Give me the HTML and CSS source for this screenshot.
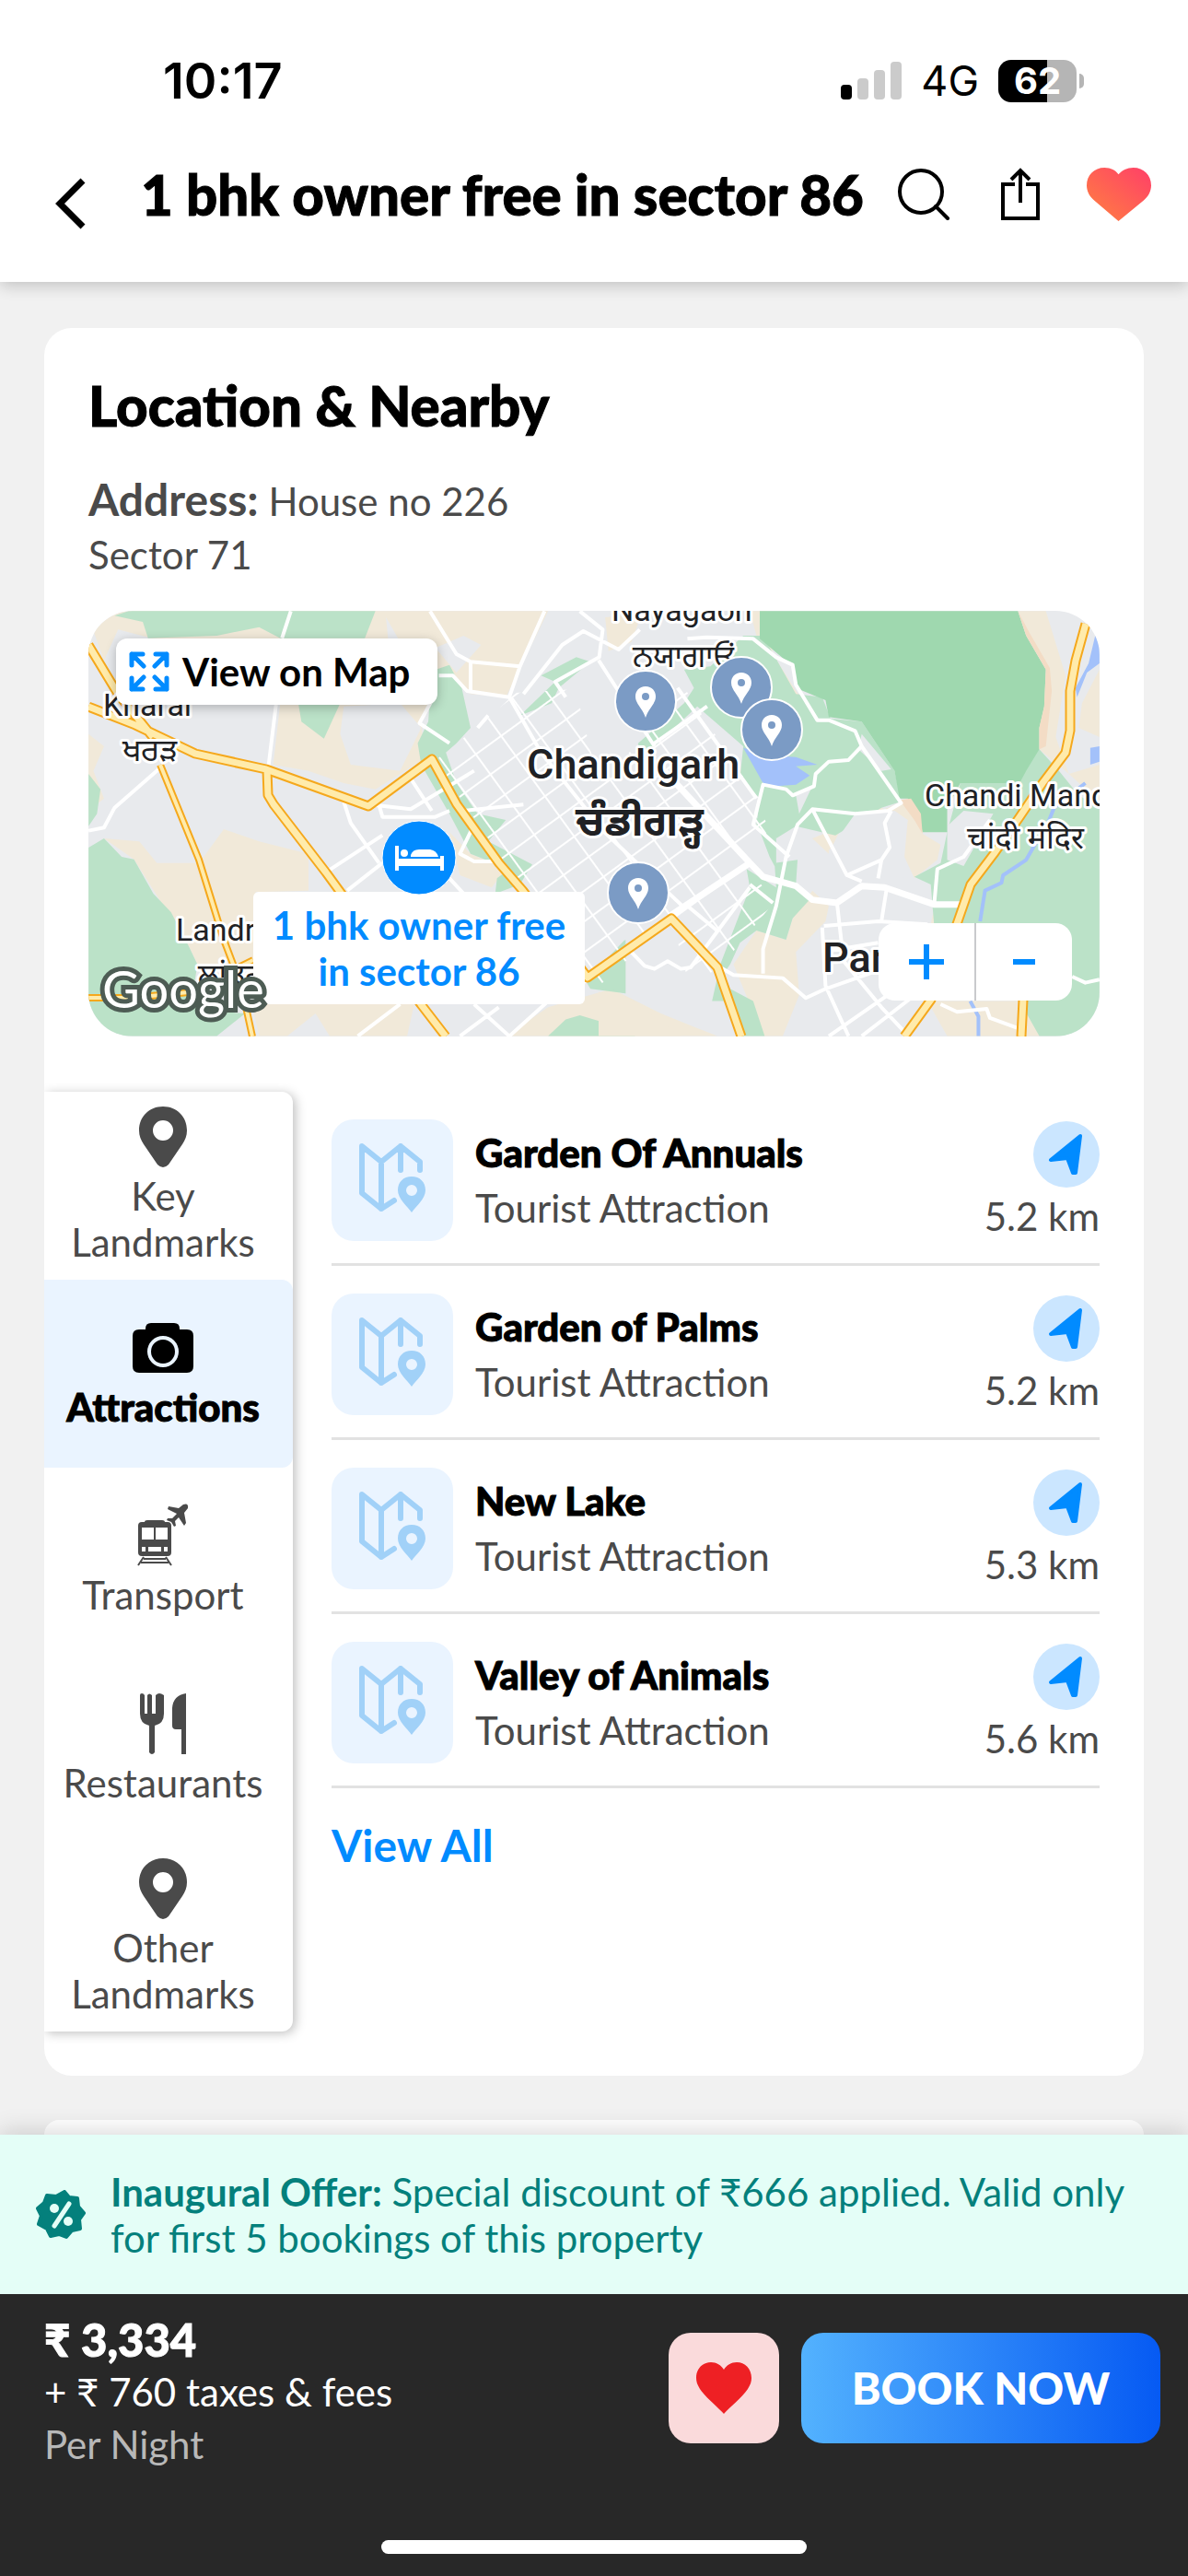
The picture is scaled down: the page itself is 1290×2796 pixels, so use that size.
FILE: index.html
```html
<!DOCTYPE html>
<html lang="en">
<head>
<meta charset="utf-8">
<meta name="viewport" content="width=device-width, initial-scale=1">
<title>1 bhk owner free in sector 86</title>
<link rel="stylesheet" href="styles.css">
</head>
<body>
<svg class="defs" width="0" height="0" aria-hidden="true">
  <defs>
    <linearGradient id="heart-fill" x1="0" y1="1" x2="1" y2="0"><stop offset="0.2" stop-color="#ff7448"/><stop offset="1" stop-color="#ff3f68"/></linearGradient>
    <symbol id="pin" viewBox="0 0 52 66"><path fill-rule="evenodd" d="M26 0C11 0 0 11 0 26C0 32 2 36 5 41L20 63Q26 69 32 63L47 41C50 36 52 32 52 26C52 11 41 0 26 0ZM26 15A11 11 0 1 1 26 37A11 11 0 1 1 26 15Z"/></symbol>
    <symbol id="place" viewBox="0 0 72 80"><g fill="none" stroke="#a1d1f8" stroke-width="6" stroke-linecap="round" stroke-linejoin="round"><path d="M38 62L24 71L3 54V3L24 20L45 3L66 20V29M24 20V71M45 3V29"/></g><path fill="#a1d1f8" fill-rule="evenodd" d="M57 36C48 36 42 42 42 51C42 60 52 68 57 75C62 68 72 60 72 51C72 42 66 36 57 36ZM57 45A6 6 0 1 1 57 57A6 6 0 1 1 57 45Z"/></symbol>
    <symbol id="navigate" viewBox="0 0 72 72"><circle cx="36" cy="36" r="36" fill="#cbe6ff"/><path fill="#018bff" stroke="#018bff" stroke-width="4" stroke-linejoin="round" d="M51 16L19 42L37 40L43 56H46Z"/></symbol>
    <symbol id="map-pin" viewBox="0 0 68 68"><circle cx="34" cy="34" r="33" fill="#7b9bc5" stroke="#fff" stroke-width="2"/><path fill="#fff" fill-rule="evenodd" d="M34 18C27 18 23 23 23 29C23 37 31 42 34 52C37 42 45 37 45 29C45 23 41 18 34 18ZM34 25A4 4 0 1 1 34 33A4 4 0 1 1 34 25Z"/></symbol>
    <pattern id="sectors" width="34" height="27" patternUnits="userSpaceOnUse" patternTransform="translate(729 997) rotate(-36)"><path d="M0 0H34M0 0V27" fill="none" stroke="#fff" stroke-width="4"/></pattern>
  </defs>
</svg>

<header class="top">
  <div class="status">
    <span class="clock">10:17</span>
    <span class="status-right">
      <svg class="signal" viewBox="0 0 66 42" aria-hidden="true"><rect y="25" width="12" height="16" rx="4"/><g fill="#cbcbcb"><rect x="18" y="18" width="12" height="23" rx="4"/><rect x="36" y="9" width="12" height="32" rx="4"/><rect x="54" width="12" height="41" rx="4"/></g></svg>
      <span class="network">4G</span>
      <span class="battery"><span class="charge">62</span></span>
    </span>
  </div>
  <div class="titlebar">
    <button class="icon-btn back" type="button" aria-label="Back"><svg viewBox="0 0 36 56"><path d="M31 3L6 28L31 53" fill="none" stroke="#000" stroke-width="7"/></svg></button>
    <h1 class="title">1 bhk owner free in sector 86</h1>
    <div class="actions">
      <button class="icon-btn search" type="button" aria-label="Search"><svg viewBox="0 0 58 58"><g fill="none" stroke="#000" stroke-width="4"><circle cx="26" cy="26" r="23"/><path d="M42 42L55 55" stroke-linecap="round"/></g></svg></button>
      <button class="icon-btn share" type="button" aria-label="Share"><svg viewBox="0 0 42 58"><path d="M15 18H2V55H40V18H27M21 38V4M11 13L21 3L31 13" fill="none" stroke="#000" stroke-width="4"/></svg></button>
      <button class="icon-btn saved" type="button" aria-label="Saved"><svg viewBox="0 0 69 57"><path fill="url(#heart-fill)" d="M34 57L8 35C3 31 0 25 0 19C0 8 8 0 19 0C26 0 31 3 34 7C38 3 43 0 50 0C61 0 69 8 69 19C69 25 66 31 61 35Z"/></svg></button>
    </div>
  </div>
</header>

<main class="content">
  <section class="card">
    <h2 class="heading">Location &amp; Nearby</h2>
    <p class="address"><strong>Address:</strong> House no 226<br>Sector 71</p>

    <div class="map">
      <svg class="map-canvas" viewBox="96 663 1098 462" preserveAspectRatio="xMidYMid slice" role="img" aria-label="Map of Chandigarh">
        <rect x="96" y="663" width="1098" height="462" fill="#e8eaed"/>
        <g transform="translate(90 650) scale(.3827 .3333)">
          <g fill="#f1e9d9">
            <path d="M16 60L100 40H1320L1260 180L1200 320L1100 310L1010 240L960 400L970 520L830 620L740 600L640 560L540 540L560 340L540 130L300 140L230 200L200 130L100 100L60 200Z"/>
            <path d="M60 780L160 790L210 860L330 860L400 750L500 790L640 830L640 950L490 955V1160L430 1230L325 1190L300 1130L145 848ZM480 1320H940L920 1424H700L660 1350L580 1424H500ZM1040 760L1100 830L1200 880L1160 940L1070 900ZM1200 1424L1320 1330L1500 1270L1640 1350L1800 1424ZM16 440L60 480L30 560L60 650L16 690Z"/>
          </g>
          <g fill="#e8eaed"><path d="M740 350L900 340L960 420L900 560L760 540L730 440ZM860 60L910 160L870 180ZM1000 160L1080 120L1130 150L1060 240Z"/></g>
          <g fill="#bbe2c8">
            <path d="M90 55L170 75L185 128L380 120L500 92L560 128H800L830 40H130Z"/>
            <path d="M612 345H728L684 455L620 400Z"/>
            <path d="M990 235L1040 215L1075 290L1100 420L1060 470L1030 500L1060 600L1120 700L1200 720L1150 790L1275 865L1240 930L1170 960L1175 910L1210 880L1100 830L1040 700L960 540L950 470L980 400Z"/>
            <path d="M1240 380L1340 270L1300 250L1400 190L1440 205L1350 290L1330 340Z"/>
            <path d="M16 570L50 620L40 700L16 740ZM16 810L60 780L110 840L145 848L200 960L250 1020L300 1130L325 1190L310 1300L395 1345L460 1350L380 1424H16Z"/>
            <path d="M1320 1424L1370 1370L1410 1356L1480 1380L1568 1424ZM1430 1250L1540 1110V1285L1440 1270Z"/>
          </g>
        </g>
        <g transform="translate(650 650) scale(.3571 .3333)">
          <g fill="#f1e9d9">
            <path d="M20 60L130 50L100 140L30 170ZM460 40H510L530 180L600 300L640 350L560 350L500 200ZM1275 40H1360L1420 250L1390 450L1430 570L1340 490V420L1360 230ZM1523 230L1470 340L1460 420L1523 450ZM1430 570L1523 540V660Z"/>
            <path d="M650 780L880 680L920 660L980 700L985 765L1040 800L1030 850L960 910L930 840L940 720L860 680L740 740L700 830ZM650 950L700 1000L690 1050L600 1150L610 1290L560 1424H500L410 1190L480 1080L570 1110L590 1040ZM0 1280L90 1300L250 1424H0ZM1020 1010H1080V1060H1010ZM1000 1310H1300L1340 1424H1060Z"/>
          </g>
          <g fill="#bbe2c8">
            <path d="M1340 490L1400 560L1460 640L1523 680V1424H1340L1280 1310L1180 1060H1020L1010 930L960 905L1040 860L1060 760L1100 600Z"/>
            <path d="M260 230L340 220L440 120H500L600 310L680 320L705 390L800 400L900 560L920 660L860 680L720 770L600 740L600 740L540 780L480 740L490 650L430 580L440 480L300 350L180 470L130 520L120 470L260 340L290 290Z"/>
            <path d="M535 860L605 850L600 930L650 970L590 1040L570 1110L480 1080L430 1120L400 1190L380 1220L400 1270L470 1310L505 1424H440L380 1310H345L370 1190L460 940L450 880L540 940ZM470 700L540 780V880L520 840ZM0 1200L80 1110V1285L0 1260Z"/>
          </g>
          <path fill="#e8eaed" d="M600 640L650 610L610 700ZM800 440L890 555L860 560L790 490ZM1060 740L1110 690L1200 700L1110 870L1060 850ZM900 690L940 720L920 830L960 910L700 890L700 820L780 700Z"/>
          <path fill="#9fd8af" d="M490 40H1275L1300 120L1360 230L1355 350L1340 420V490L1300 560L1280 600H1100L1060 680V760H985L970 690L940 650L915 650L900 560L850 480L800 400L700 385L690 330L600 290L590 220L490 130Z"/>
          <path fill="#f3dcc5" d="M1275 40L1310 110L1372 225L1378 300L1360 480L1340 490V420L1355 350L1360 230L1300 120ZM915 655L950 650L980 700L985 765L960 720Z"/>
          <path fill="#a3c1fa" d="M440 485L520 510L600 515L665 540L600 545L642 575L600 605L540 610L500 600ZM1510 120H1523V210L1485 240L1455 320L1450 290L1490 210ZM1495 485L1523 480V530L1495 540Z"/>
          <path class="river" d="M1480 600L1385 680L1370 720L1300 850L1230 900L1225 925L1175 950L1160 1050M1130 1310L1155 1360V1424"/>
        </g>
        <path fill="url(#sectors)" d="M472 826L530 780L560 752L625 748L650 850L700 800L740 742L818 860L835 900L811 937L840 980L790 1040L750 1075L729 997L640 1080L575 975Z"/>
        <g class="streets" transform="translate(90 650) scale(.3827 .3333)">
          <path d="M590 40L565 128M548 345L525 560M985 40L1060 180L1100 205L1240 220M1310 40L1240 220L1210 320L1300 500L1480 760L1710 1010M1410 40L1475 100L1465 190L1340 270L1370 320M1010 250L1050 250L1090 300L1210 320M1250 310L1360 150L1420 105L1520 165L1580 100M1100 205V305M1000 310L955 405L1040 470M16 755L60 745L90 680L220 550M740 660L760 730L840 860M840 670L850 710H1000L1040 690M815 670L930 685L1110 560M690 890L850 770M930 585L990 690M1080 690L1250 670M1110 735L1070 830L1110 855H1180M780 1424L900 1320M1070 1424L1180 1330M1110 1320L1210 1424L1330 1300M750 950L850 860M1000 860L1080 960M1150 380L1120 420"/>
        </g>
        <g class="streets" transform="translate(650 650) scale(.3571 .3333)">
          <path d="M0 200L60 300L170 480M170 470L330 350M240 290L480 650M270 130L330 125L470 130L540 190L590 215L600 280L665 395H700L780 430L800 480L760 525L700 530L660 570L655 610L590 640L570 620L500 605L470 735L580 840M800 480L920 665L880 690L780 700L650 685L605 735L570 840L540 1000L500 1140V1220M650 685L755 900L800 920M755 900L860 850L885 810L870 730L890 690M860 850L850 910M725 990L745 1180L860 1330L930 1410M875 950L860 1050M1020 1000L1030 880L1110 840L1190 720M370 1200L410 1225L560 1235L630 1300L690 1270L850 1210M685 1065L850 1050L1000 1060M680 1070L690 1260L760 1424M680 1150L850 1120M700 1424L880 1290M800 1424L950 1300M1440 1230L1480 1250L1523 1240M1040 1320L1090 1345L1180 1335L1190 1365L1280 1400M90 1140L140 1195L170 1205L210 1180L250 1205L280 1200L460 940M530 990L460 930M270 1000L360 1080"/>
          <path class="avenue" d="M200 560L330 710L460 860M220 1030L460 860L500 905L600 935L650 980L725 990L800 935L870 940L1020 995L1105 995"/>
        </g>
        <g class="highway-edge">
          <path d="M96 700L128 753L166 800M96 767L147 787L212 818L289 835L400 875L469 824L496 873L542 937L568 967L638 1061L729 997L779 1050L805 1125M290 836L291 863L297 873L354 947L373 973L457 1090L484 1125M1179 677L1168 717L1162 750V793L1157 817L1132 850L1107 887L1079 927L1054 960L1039 1003L1011 1085L982 1125M1111 1085L1109 1125"/>
          <path class="thin" d="M174 830L216 933L243 1020L262 1070L274 1125M96 1083H143L205 1077L275 1042"/>
        </g>
        <g class="highway">
          <path d="M96 700L128 753L166 800M96 767L147 787L212 818L289 835L400 875L469 824L496 873L542 937L568 967L638 1061L729 997L779 1050L805 1125M290 836L291 863L297 873L354 947L373 973L457 1090L484 1125M1179 677L1168 717L1162 750V793L1157 817L1132 850L1107 887L1079 927L1054 960L1039 1003L1011 1085L982 1125M1111 1085L1109 1125"/>
          <path class="thin" d="M174 830L216 933L243 1020L262 1070L274 1125M96 1083H143L205 1077L275 1042"/>
        </g>
        <g class="town">
          <text x="664" y="674">Nayagaon</text>
          <text x="687" y="724">ਨਯਾਗਾਓਂ</text>
          <text x="112" y="777">Kharar</text>
          <text x="133" y="826">ਖਰੜ</text>
          <text x="1004" y="875">Chandi Mandir</text>
          <text x="1050" y="921">चांदी मंदिर</text>
          <text x="191" y="1021">Landran</text>
          <text x="215" y="1070">ਲਾਂਡਰਾਂ</text>
        </g>
        <g class="city">
          <text x="572" y="845">Chandigarh</text>
          <text class="heavy" x="625" y="907">ਚੰਡੀਗੜ੍ਹ</text>
          <text x="893" y="1055">Panchkula</text>
        </g>
        <use href="#map-pin" x="667" y="727" width="68" height="68"/>
        <use href="#map-pin" x="771" y="712" width="68" height="68"/>
        <use href="#map-pin" x="804" y="758" width="68" height="68"/>
        <use href="#map-pin" x="659" y="935" width="68" height="68"/>
      </svg>
      <button class="view-map" type="button"><svg viewBox="0 0 44 44" aria-hidden="true"><path d="M3 15V3H15M3 3L16 16M29 3H41V15M41 3L28 16M3 29V41H15M3 41L16 28M29 41H41V29M41 41L28 28" fill="none" stroke="#018bff" stroke-width="5" stroke-linecap="round" stroke-linejoin="round"/></svg>View on Map</button>
      <div class="stay">
        <svg class="stay-pin" viewBox="0 0 82 82" aria-hidden="true"><circle cx="41" cy="41" r="40" fill="#018bff" stroke="#fff" stroke-width="1"/><path fill="#fff" d="M15 28H19V42H64V39H68V55H64V50H19V55H15ZM21 36A4 4 0 1 1 29 36A4 4 0 1 1 21 36ZM32 40V38Q34 32 41 32H53Q60 33 62 40Z"/><path d="M19 41H64" stroke="#018bff" stroke-width="2"/></svg>
        <span class="stay-label">1 bhk owner free in sector 86</span>
      </div>
      <span class="google">Google</span>
      <div class="zoom">
        <button type="button" aria-label="Zoom in"><svg viewBox="0 0 40 40"><path d="M1 20H39M20 1V39" stroke="#018bff" stroke-width="6"/></svg></button>
        <button type="button" aria-label="Zoom out"><svg viewBox="0 0 40 40"><path d="M8 20H32" stroke="#018bff" stroke-width="6"/></svg></button>
      </div>
    </div>

    <div class="nearby">
      <nav class="tabs" aria-label="Nearby categories">
        <button class="tab" type="button"><svg viewBox="0 0 66 66" aria-hidden="true"><use href="#pin" x="7" width="52" height="66"/></svg>Key Landmarks</button>
        <button class="tab active" type="button" aria-current="true"><svg viewBox="0 0 66 66" aria-hidden="true"><path fill-rule="evenodd" d="M14 12Q14 6 20 6H45Q51 6 51 12V13H59Q66 13 66 20V53Q66 60 59 60H7Q0 60 0 53V20Q0 13 7 13H14ZM33 20A17 17 0 1 0 33 54A17 17 0 1 0 33 20ZM33 24A13 13 0 1 1 33 50A13 13 0 1 1 33 24Z"/></svg>Attractions</button>
        <button class="tab" type="button"><svg viewBox="0 0 66 66" aria-hidden="true"><path fill-rule="evenodd" d="M13 18Q13 16 16 16H32Q35 16 35 18H38Q42 18 42 22V51Q42 55 38 55H10Q6 55 6 51V22Q6 18 10 18H13ZM10 24V37H23V24ZM25 24V37H38V24ZM10 45V50H14V45ZM17 45V50H31V45ZM34 45V50H38V45Z"/><path d="M12 56L6 65M36 56L42 65M12 58H36M9 62H39" fill="none" stroke="#4a4a4a" stroke-width="2"/><path d="M39 1L50 3L55 -1Q61 -3 60 3L56 8L58 19L56 22L50 13L46 17L47 22L45 23L42 18L37 16L38 14L43 14L48 9L38 4Z"/></svg>Transport</button>
        <button class="tab" type="button"><svg viewBox="0 0 66 66" aria-hidden="true"><path d="M8 2Q8 0 10 0T13 2V22H16V2Q18 -1 21 2V22H25V2Q27 0 29 0T34 2V22Q34 33 24 35V64Q21 68 18 64V35Q8 33 8 22ZM58 0V66H53V39H47Q43 39 43 35V16Q44 2 58 0Z"/></svg>Restaurants</button>
        <button class="tab" type="button"><svg viewBox="0 0 66 66" aria-hidden="true"><use href="#pin" x="7" width="52" height="66"/></svg>Other Landmarks</button>
      </nav>
      <div class="places">
        <ul class="place-list">
          <li class="place"><span class="thumb"><svg aria-hidden="true"><use href="#place"/></svg></span><div class="info"><h3>Garden Of Annuals</h3><p>Tourist Attraction</p></div><div class="distance"><svg aria-hidden="true"><use href="#navigate"/></svg><span>5.2 km</span></div></li>
          <li class="place"><span class="thumb"><svg aria-hidden="true"><use href="#place"/></svg></span><div class="info"><h3>Garden of Palms</h3><p>Tourist Attraction</p></div><div class="distance"><svg aria-hidden="true"><use href="#navigate"/></svg><span>5.2 km</span></div></li>
          <li class="place"><span class="thumb"><svg aria-hidden="true"><use href="#place"/></svg></span><div class="info"><h3>New Lake</h3><p>Tourist Attraction</p></div><div class="distance"><svg aria-hidden="true"><use href="#navigate"/></svg><span>5.3 km</span></div></li>
          <li class="place"><span class="thumb"><svg aria-hidden="true"><use href="#place"/></svg></span><div class="info"><h3>Valley of Animals</h3><p>Tourist Attraction</p></div><div class="distance"><svg aria-hidden="true"><use href="#navigate"/></svg><span>5.6 km</span></div></li>
        </ul>
        <a class="view-all" href="#places">View All</a>
      </div>
    </div>
  </section>
  <section class="card next-card"></section>
</main>

<footer class="bottom">
  <div class="offer">
    <svg class="offer-icon" viewBox="0 0 54 54" aria-hidden="true"><path fill="#04807c" stroke="#04807c" stroke-width="4" stroke-linejoin="round" d="M31 2L36 8L45 9L46 18L52 25L47 32L48 42L39 44L33 51L25 48L16 50L12 42L3 37L6 28L2 20L9 14L12 6L22 7Z"/><path d="M36 15L20 39" stroke="#e4fef7" stroke-width="5" stroke-linecap="round"/><circle cx="20" cy="20" r="5" fill="#e4fef7"/><circle cx="35" cy="34" r="5" fill="#e4fef7"/></svg>
    <p><strong>Inaugural Offer:</strong> Special discount of ₹666 applied. Valid only for first 5 bookings of this property</p>
  </div>
  <div class="booking">
    <div class="price">
      <strong>₹ 3,334</strong>
      <span>+ ₹ 760 taxes &amp; fees</span>
      <span class="per">Per Night</span>
    </div>
    <button class="wish" type="button" aria-label="Remove from wishlist"><svg viewBox="0 0 60 56"><path fill="#ee2024" d="M30 56C25 50 10 38 4 29C1 24 0 21 0 17C0 7 7 0 16 0C22 0 27 3 30 8C33 3 38 0 44 0C53 0 60 7 60 17C60 21 59 24 56 29C50 38 35 50 30 56Z"/></svg></button>
    <button class="book" type="button">BOOK NOW</button>
  </div>
  <div class="home-indicator"></div>
</footer>
</body>
</html>
```
FILE: styles.css
```css
* { box-sizing: border-box; }
body, h1, h2, h3, p, ul { margin: 0; padding: 0; }
body {
  height: 100vh;
  display: flex;
  flex-direction: column;
  background: #f1f1f1;
  color: #000;
  font-family: Lato, "Noto Sans", sans-serif;
  font-size: 42px;
  line-height: 50px;
}
button { border: 0; padding: 0; margin: 0; background: none; color: inherit; font: inherit; cursor: pointer; }
svg { display: block; }
.defs { position: absolute; }
.title, .heading, .info h3, .tab.active, .price strong { font-weight: 900; -webkit-text-stroke: 1px currentColor; }

/* Header */
.top { position: relative; flex: none; padding: 56px 40px 50px 56px; background: #fff; box-shadow: 0 4px 16px rgba(0, 0, 0, .2); }
.status { display: flex; justify-content: space-between; align-items: center; height: 64px; padding: 0 81px 0 121px; font-family: Inter, sans-serif; }
.clock { font-size: 54px; font-weight: 600; }
.status-right { display: flex; align-items: center; gap: 21px; }
.signal { width: 66px; height: 42px; }
.network { font-size: 45px; }
.battery { position: relative; width: 85px; height: 46px; border-radius: 14px; background: linear-gradient(90deg, #000 62%, #b5b5b5 62%); color: #fff; text-align: center; font-size: 40px; font-weight: 700; line-height: 46px; }
.battery::after { content: ""; position: absolute; left: 88px; top: 15px; width: 5px; height: 16px; border-radius: 0 6px 6px 0; background: #b5b5b5; }
.titlebar { display: flex; align-items: center; min-height: 136px; padding-top: 46px; }
.icon-btn { flex: none; }
.back { width: 36px; margin: 20px 58px 0 3px; }
.back svg { width: 36px; height: 56px; }
.title { flex: 1; min-width: 0; font-size: 60px; line-height: 72px; white-space: nowrap; }
.actions { display: flex; align-items: center; gap: 51px; }
.search svg { width: 58px; height: 58px; }
.share { margin-left: 4px; }
.share svg { width: 42px; height: 58px; }
.saved svg { width: 70px; height: 58px; }

/* Content */
.content { flex: 1; min-height: 0; display: flex; flex-direction: column; gap: 48px; padding: 50px 48px 0; }
.card { flex: none; padding: 48px; border-radius: 30px; background: #fff; }
.next-card { flex: 1; padding: 0; border-radius: 30px 30px 0 0; }
.heading { font-size: 60px; line-height: 72px; }
.address { margin-top: 37px; color: #4a4a4a; line-height: 58px; }
.address strong { font-size: 48px; }

/* Map */
.map { position: relative; height: 462px; margin-top: 32px; border-radius: 48px; overflow: hidden; }
.map-canvas { width: 100%; height: 100%; }
.streets, .river { fill: none; stroke: #fff; stroke-width: 4; stroke-linejoin: round; }
.streets path, .river { vector-effect: non-scaling-stroke; }
.streets .avenue { stroke-width: 7; }
.river { stroke: #a3c1fa; }
.highway, .highway-edge { fill: none; stroke-linejoin: round; }
.highway { stroke: #ffebab; stroke-width: 7; }
.highway-edge { stroke: #f5a81c; stroke-width: 11; }
.highway .thin { stroke-width: 4; }
.highway-edge .thin { stroke-width: 8; }
.town, .city { font-family: Roboto, "Noto Sans", "Noto Sans Gurmukhi", "Noto Sans Devanagari", sans-serif; fill: #202124; stroke: #fff; stroke-width: 6; stroke-linejoin: round; paint-order: stroke; }
.town { font-size: 34px; }
.city { font-size: 45px; font-weight: 500; }
.city .heavy { font-weight: 700; }
.google { position: absolute; left: 15px; bottom: 20px; color: #fff; font-size: 56px; line-height: 64px; -webkit-text-stroke: 10px #4d5c54; paint-order: stroke; }
.view-map { position: absolute; left: 30px; top: 30px; display: flex; align-items: center; gap: 14px; height: 72px; padding: 0 30px 0 14px; border-radius: 12px; background: #fff; box-shadow: 0 3px 12px rgba(0, 0, 0, .25); font-weight: 700; }
.view-map svg { width: 44px; height: 44px; }
.stay { position: absolute; left: 179px; top: 227px; width: 360px; display: flex; flex-direction: column; align-items: center; }
.stay-pin { position: relative; width: 82px; height: 82px; margin-bottom: -4px; z-index: 1; }
.stay-label { padding: 11px 18px; border-radius: 6px; background: #fff; color: #018bff; font-weight: 700; text-align: center; }
.zoom { position: absolute; right: 30px; bottom: 39px; display: flex; width: 210px; height: 84px; border-radius: 18px; background: #fff; }
.zoom button { flex: 1; display: flex; align-items: center; justify-content: center; }
.zoom button + button { border-left: 2px solid #c9cacd; }
.zoom svg { width: 40px; height: 40px; }

/* Nearby places */
.nearby { display: flex; align-items: flex-start; gap: 42px; margin: 60px 0 0 -48px; }
.tabs { flex: none; width: 270px; border-radius: 0 12px 12px 0; background: #fff; box-shadow: 3px 2px 12px rgba(0, 0, 0, .25); clip-path: inset(-20px -20px -20px 0); }
.tab { display: flex; flex-direction: column; align-items: center; justify-content: center; gap: 6px; width: 100%; height: 204px; padding: 0 24px 0 12px; color: #4a4a4a; border-radius: 0 12px 12px 0; }
.tab svg { width: 66px; height: 66px; fill: currentColor; overflow: visible; }
.tab.active { background: #eaf4ff; color: #000; }
.places { flex: 1; min-width: 0; }
.place-list { list-style: none; }
.place { display: flex; gap: 24px; padding: 30px 0 24px; border-bottom: 3px solid #e2e2e2; }
.thumb { flex: none; display: flex; align-items: center; justify-content: center; width: 132px; height: 132px; border-radius: 24px; background: #eaf4ff; }
.thumb svg { width: 72px; height: 80px; }
.info { flex: 1; min-width: 0; padding-top: 6px; line-height: 60px; }
.info h3 { font-size: 42px; }
.info p, .distance { color: #4a4a4a; }
.distance { display: flex; flex-direction: column; align-items: flex-end; gap: 6px; padding-top: 2px; }
.distance svg { width: 72px; height: 72px; }
.view-all { display: inline-block; margin-top: 32px; color: #018bff; font-size: 48px; line-height: 60px; font-weight: 700; text-decoration: none; }

/* Footer */
.bottom { position: relative; flex: none; background: #282828; box-shadow: 0 -4px 24px rgba(0, 0, 0, .15); }
.offer { display: flex; align-items: center; gap: 27px; padding: 37px 48px 36px 39px; background: #e4fef7; color: #04807c; }
.offer-icon { flex: none; width: 54px; height: 54px; }
.booking { display: flex; align-items: flex-start; gap: 24px; padding: 21px 30px 0 48px; color: #fff; }
.price { flex: 1; display: flex; flex-direction: column; line-height: 57px; }
.price strong { font-size: 49px; }
.price .per { color: #b8b8b8; }
.wish, .book { height: 120px; margin-top: 21px; border-radius: 24px; }
.wish { display: flex; align-items: center; justify-content: center; width: 120px; background: #fadadb; }
.wish svg { width: 60px; height: 56px; }
.book { width: 390px; background: linear-gradient(90deg, #53b2fe, #065af3); font-size: 48px; font-weight: 900; }
.home-indicator { width: 462px; height: 15px; margin: 75px auto 24px; border-radius: 8px; background: #fff; }
```
